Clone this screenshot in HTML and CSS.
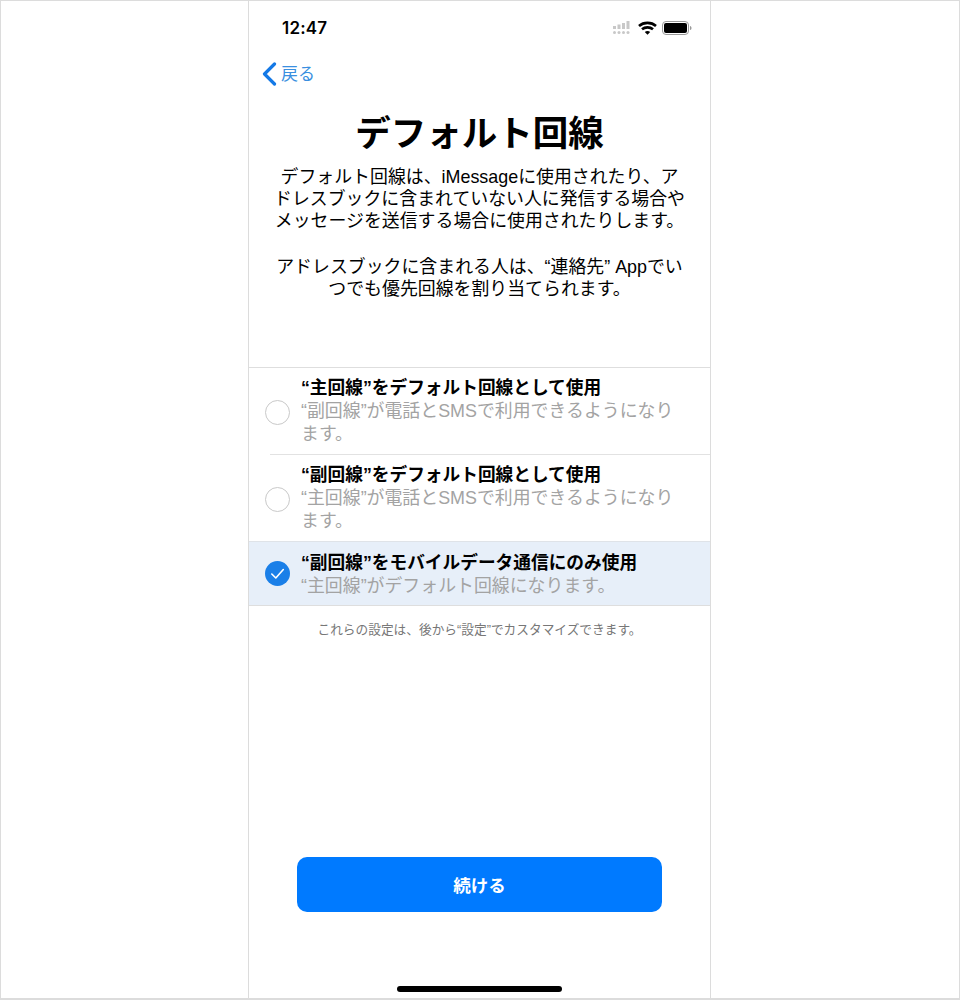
FILE: index.html
```html
<!DOCTYPE html>
<html lang="ja">
<head>
<meta charset="utf-8">
<title>デフォルト回線</title>
<link rel="stylesheet" href="styles.css">
</head>
<body>
<div class="frame">
  <main class="phone">
    <div class="status">
      <span class="time">12:47</span>
      <div class="status-icons">
        <svg class="signal" width="20" height="14" viewBox="0 0 20 14" fill="#c8c8c8">
          <rect x="0" y="5" width="3" height="3"/><rect x="4.5" y="3.5" width="3" height="4.5"/><rect x="9" y="2" width="3" height="6"/><rect x="13.5" y="0" width="3" height="8"/>
          <circle cx="1.5" cy="11.5" r="1.5"/><circle cx="6" cy="11.5" r="1.5"/><circle cx="10.5" cy="11.5" r="1.5"/><circle cx="15" cy="11.5" r="1.5"/>
        </svg>
        <svg class="wifi" width="19" height="14" viewBox="0 0 19 14" fill="none" stroke="#000" stroke-width="2.6">
          <path d="M1 5C5.700.8 13.300.8 18 5"/><path d="M4 8.300C7 5.700 12 5.700 15 8.300"/><path d="M9.500 13.800L6.800 10.900C8.300 9.700 10.700 9.700 12.200 10.900Z" fill="#000" stroke="none"/>
        </svg>
        <svg class="battery" width="30" height="14" viewBox="0 0 30 14">
          <rect x="0.500" y="0.500" width="26" height="13" rx="3.500" fill="none" stroke="#9a9a9a"/>
          <rect x="2" y="2" width="23" height="10" rx="2" fill="#000"/>
          <path d="M28 5v4c1 0 1.500-1 1.500-2s-.5-2-1.500-2z" fill="#9a9a9a"/>
        </svg>
      </div>
    </div>
    <nav class="nav">
      <svg class="chev" width="15" height="24" viewBox="0 0 15 24" fill="none" stroke="#1479e6" stroke-width="3.200" stroke-linecap="round" stroke-linejoin="round"><path d="M12.500 2L2.500 12l10 10"/></svg>
      <span class="back">戻る</span>
    </nav>
    <h1 class="title">デフォルト回線</h1>
    <section class="intro">
      <p>デフォルト回線は、iMessageに使用されたり、ア<br>ドレスブックに含まれていない人に発信する場合や<br>メッセージを送信する場合に使用されたりします。</p>
      <p>アドレスブックに含まれる人は、“連絡先” Appでい<br>つでも優先回線を割り当てられます。</p>
    </section>
    <ul class="options">
      <li class="option">
        <span class="radio"></span>
        <div class="option-text">
          <div class="option-title">“主回線”をデフォルト回線として使用</div>
          <div class="option-sub">“副回線”が電話とSMSで利用できるようになり<br>ます。</div>
        </div>
      </li>
      <li class="option divided">
        <span class="radio"></span>
        <div class="option-text">
          <div class="option-title">“副回線”をデフォルト回線として使用</div>
          <div class="option-sub">“主回線”が電話とSMSで利用できるようになり<br>ます。</div>
        </div>
      </li>
      <li class="option selected">
        <svg class="check" width="25" height="25" viewBox="0 0 25 25"><circle cx="12.500" cy="12.500" r="12.500" fill="#1a7fe8"/><path d="M6.800 13l4 4 7.500-8.500" fill="none" stroke="#fff" stroke-width="1.600" stroke-linecap="round" stroke-linejoin="round"/></svg>
        <div class="option-text">
          <div class="option-title">“副回線”をモバイルデータ通信にのみ使用</div>
          <div class="option-sub">“主回線”がデフォルト回線になります。</div>
        </div>
      </li>
    </ul>
    <p class="note">これらの設定は、後から“設定”でカスタマイズできます。</p>
    <button class="continue">続ける</button>
    <div class="home"></div>
  </main>
</div>
</body>
</html>
```
FILE: styles.css
```css
* { box-sizing: border-box; }
html, body { margin: 0; padding: 0; background: #fff; }
body { font-family: "Liberation Sans", "Noto Sans CJK JP", sans-serif; color: #000; }
.frame {
  width: 960px; height: 1000px;
  border: 1px solid #dcdcdc; border-bottom-width: 2px;
  display: flex;
}
.phone {
  width: 463px; margin-left: 247px; height: 100%;
  border-left: 1px solid #dcdcdc; border-right: 1px solid #dcdcdc;
  display: flex; flex-direction: column;
}
.status {
  height: 54px; display: flex; align-items: center; justify-content: space-between;
  padding: 0 18px 0 33px;
}
.time { font-size: 17px; font-weight: 600; font-family: "Inter", "Liberation Sans", sans-serif; letter-spacing: 0.2px; }
.status-icons { display: flex; align-items: center; gap: 5px; }
.nav { height: 38px; display: flex; align-items: center; padding-left: 13px; gap: 4px; }
.back { font-size: 17px; color: #3a8fe0; margin-bottom: 4px; }
.title {
  margin: 0; margin-top: 19px; text-align: center; font-size: 35.500px; font-weight: 700; line-height: 44px;
}
.intro { margin-top: 9.500px; text-align: center; font-size: 17.900px; line-height: 22.400px; }
.intro p { margin: 0 0 23px; }
.options { list-style: none; margin: 43px 0 0; padding: 0; border-top: 1px solid #dedede; border-bottom: 1px solid #dedede; }
.option { position: relative; display: flex; align-items: center; padding: 7px 0 7px 16px; min-height: 87px; }
.option:first-child { min-height: 86px; }
.option.divided::before { content: ""; position: absolute; top: 0; left: 21px; right: 0; border-top: 1px solid #e2e2e2; }
.option.selected { min-height: 64px; padding-top: 5px; padding-bottom: 5px; background: #e7eff9; box-shadow: inset 0 1px 0 #dfe3e8; }
.radio { width: 25px; height: 25px; border-radius: 50%; border: 1.500px solid #c9c9c9; flex: none; margin-top: 3px; }
.divided .radio { margin-top: 5px; }
.check { flex: none; margin-top: 1px; }
.option-text { margin-left: 11px; margin-top: 1px; }
.divided .option-text { margin-top: 3px; }
.option.selected .option-text { margin-top: 4px; }
.option-title { font-size: 17.700px; font-weight: 700; line-height: 23px; }
.option-sub { font-size: 17.900px; line-height: 23px; color: #a3a3a3; }
.note { margin: 15px 0 0; text-align: center; font-size: 12.700px; line-height: 18px; color: #777; }
.continue {
  display: block; width: 365px; height: 55px; margin: 218px 0 0 48px;
  background: #007aff; border: 0; border-radius: 10px;
  color: #fff; font: 700 17.500px "Liberation Sans", "Noto Sans CJK JP", sans-serif;
}
.home { width: 165px; height: 6px; border-radius: 3px; background: #000; margin: 74px 0 0 148px; }
```
